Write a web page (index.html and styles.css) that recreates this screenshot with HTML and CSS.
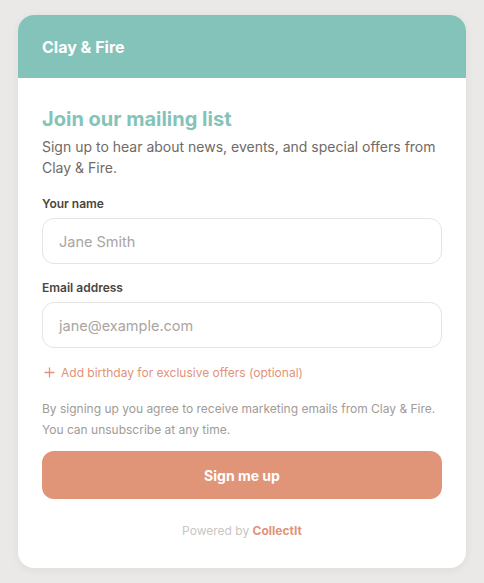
FILE: index.html
```html
<!DOCTYPE html>
<html>
<head>
<meta charset="utf-8">
<link rel="stylesheet" href="styles.css">
</head>
<body>
<div class="card">
  <div class="card-header">Clay &amp; Fire</div>
  <div class="card-body">
    <h1 class="title">Join our mailing list</h1>
    <p class="subtitle">Sign up to hear about news, events, and special offers from Clay &amp; Fire.</p>
    <label class="label label-first">Your name</label>
    <div class="input">Jane Smith</div>
    <label class="label">Email address</label>
    <div class="input">jane@example.com</div>
    <div class="addlink">
      <svg class="plus" width="11" height="11" viewBox="0 0 11 11"><path d="M5.5 0.5v10M0.5 5.5h10" stroke="#e0937a" stroke-width="1.3" fill="none"/></svg>
      <span>Add birthday for exclusive offers (optional)</span>
    </div>
    <p class="disclaimer">By signing up you agree to receive marketing emails from Clay &amp; Fire. You can unsubscribe at any time.</p>
    <div class="button">Sign me up</div>
    <div class="powered">Powered by <span class="brand">CollectIt</span></div>
  </div>
</div>
</body>
</html>
```
FILE: styles.css
```css
* { box-sizing: border-box; }
html, body { margin: 0; }
body {
  background: #ebe9e7;
  padding: 15px 18px;
  font-family: Inter, "Noto Sans", sans-serif;
  height: 583px;
}
.card {
  width: 448px;
  background: #ffffff;
  border-radius: 16px;
  overflow: hidden;
  box-shadow: 0 2px 10px rgba(0,0,0,0.06);
}
.card-header {
  background: #84c3b9;
  height: 63px;
  display: flex;
  align-items: center;
  padding: 0 24px;
  color: #ffffff;
  font-weight: 700;
  font-size: 16px;
}
.card-body {
  padding: 27px 24px 29px;
  display: flex;
  flex-direction: column;
}
.title {
  margin: 0;
  font-size: 20px;
  line-height: 28px;
  font-weight: 700;
  color: #84c3b9;
}
.subtitle {
  margin: 3px 0 0;
  font-size: 14px;
  line-height: 21px;
  color: #6f6a66;
}
.label {
  display: block;
  margin-top: 16px;
  font-size: 12px;
  line-height: 16px;
  font-weight: 600;
  color: #4a4541;
}
.label-first { margin-top: 18px; }
.input {
  margin-top: 6px;
  height: 46px;
  border: 1px solid #e6e4e2;
  border-radius: 12px;
  display: flex;
  align-items: center;
  padding: 0 16px;
  font-size: 14.5px;
  color: #a9a5a2;
}
.addlink {
  margin-top: 15px;
  display: flex;
  align-items: center;
  gap: 6px;
  height: 18px;
  font-size: 12px;
  color: #e0937a;
  padding-left: 2px;
}
.plus { display: block; }
.disclaimer {
  margin: 18px 0 0;
  font-size: 12px;
  line-height: 20.5px;
  color: #a09b97;
}
.button {
  margin-top: 11px;
  height: 48px;
  flex: none;
  border-radius: 12px;
  background: #e09478;
  color: #ffffff;
  font-weight: 700;
  font-size: 14px;
  display: flex;
  align-items: center;
  justify-content: center;
}
.powered {
  margin-top: 24px;
  text-align: center;
  font-size: 12px;
  line-height: 16px;
  color: #c9c6c3;
}
.brand { color: #e0937a; font-weight: 700; }
```
